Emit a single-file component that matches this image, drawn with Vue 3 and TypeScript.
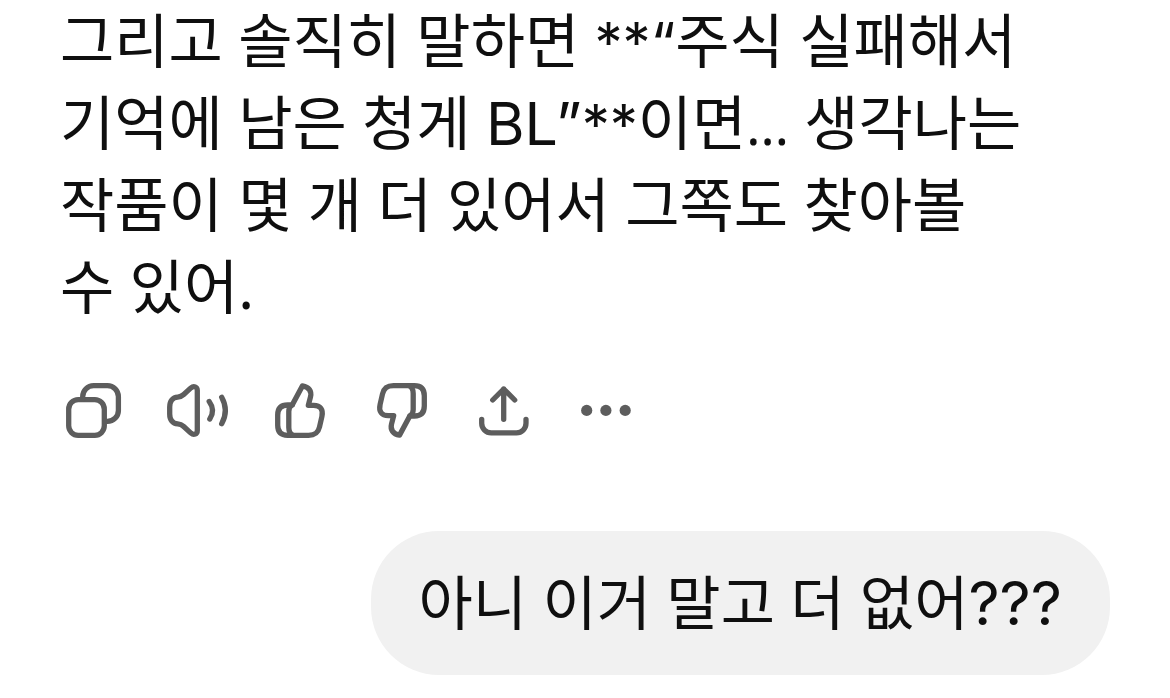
<script setup lang="ts">
interface Run { text: string; kind?: 'latin' | 'mark' | 'title' | 'ellipsis' }

const lines: Run[][] = [
  [{ text: '그리고 솔직히 말하면 ' }, { text: '**“', kind: 'mark' }, { text: '주식 실패해서' }],
  [{ text: '기억에 남은 청게 ' }, { text: 'BL”', kind: 'title' }, { text: '**', kind: 'mark' }, { text: '이면' }, { text: '...', kind: 'ellipsis' }, { text: ' 생각나는' }],
  [{ text: '작품이 몇 개 더 있어서 그쪽도 찾아볼' }],
  [{ text: '수 있어.' }],
]
const question: Run[] = [{ text: '아니 이거 말고 더 없어' }, { text: '???', kind: 'latin' }]
</script>

<template>
  <main class="chat">
    <p class="answer">
      <span v-for="(line, i) in lines" :key="i" class="line"><span v-for="(run, j) in line" :key="j" :class="run.kind">{{ run.text }}</span></span>
    </p>
    <div class="actions">
      <button type="button" aria-label="Copy">
        <svg viewBox="0 0 64 64">
          <rect x="8.7" y="19.7" width="35.6" height="35.6" rx="9.5" />
          <path d="M22.7 19v-2.4a11 11 0 0 1 11-11h13.7a11 11 0 0 1 11 11v13.8a11 11 0 0 1-11 11H45" />
        </svg>
      </button>
      <button type="button" aria-label="Read aloud">
        <svg viewBox="0 0 64 64">
          <path d="M7.7 27c0-6 3-9.6 8-9.9 2.5-.2 4-.8 6-2.6l7.2-6.6c2.8-2.4 6.4-1.2 6.4 2.6v40c0 3.8-3.6 5-6.4 2.6l-7.2-6.6c-2-1.8-3.5-2.4-6-2.6-5-.3-8-3.9-8-9.9z" />
          <path d="M47.2 21.5c4 5.5 4.3 12 .6 17.5M59.7 17.2c4.7 8.5 4.7 18 0 26.5" />
        </svg>
      </button>
      <button type="button" aria-label="Good response">
        <svg viewBox="0 0 64 64">
          <path d="M28.2 25h-4.5c-6.5 0-10 3.5-10 10v10.3c0 6.5 3.5 10 10 10h20.8c6.5 0 9.6-2.3 11-8.3l2.4-10.5c1.6-7-1.6-11.2-8.2-11.2h-5.4l2.2-8.5c1.4-5.5-1.6-10-8-11z" />
          <path d="M28.2 25c-2.4 1.2-3.4 3-3.4 6.5v16c0 4 1.2 6.3 4 7.8" />
        </svg>
      </button>
      <button type="button" aria-label="Bad response">
        <svg viewBox="0 0 64 64">
          <g transform="rotate(180 36 30.5)">
            <path d="M28.2 25h-4.5c-6.5 0-10 3.5-10 10v10.3c0 6.5 3.5 10 10 10h20.8c6.5 0 9.6-2.3 11-8.3l2.4-10.5c1.6-7-1.6-11.2-8.2-11.2h-5.4l2.2-8.5c1.4-5.5-1.6-10-8-11z" />
            <path d="M28.2 25c-2.4 1.2-3.4 3-3.4 6.5v16c0 4 1.2 6.3 4 7.8" />
          </g>
        </svg>
      </button>
      <button type="button" aria-label="Share">
        <svg viewBox="0 0 64 64">
          <path d="M35.7 39.3V9M24.7 20l11-11 11 11M13.7 39.3v4a9.5 9.5 0 0 0 9.5 9.5h25.3a9.5 9.5 0 0 0 9.5-9.5v-4" />
        </svg>
      </button>
      <button type="button" aria-label="More">
        <svg viewBox="0 0 64 64">
          <g class="dots"><circle cx="16.7" cy="30.4" r="5.6" /><circle cx="35.9" cy="30.4" r="5.6" /><circle cx="55.2" cy="30.4" r="5.6" /></g>
        </svg>
      </button>
    </div>
    <p class="bubble"><span v-for="(run, i) in question" :key="i" :class="run.kind">{{ run.text }}</span></p>
  </main>
</template>

<style>
body { margin: 0; background: #fff; }
</style>
<style scoped>
.chat { display: flex; flex-direction: column; padding: 0 60px; color: #0f0f0f; font: 59px/82px "Noto Sans", "Noto Sans CJK KR", sans-serif; }
.answer { margin: -1px 0 0; }
.line { display: block; height: 82px; white-space: pre; }
.latin, .mark, .title { font-family: Inter, sans-serif; line-height: 1; }
.latin { font-size: 61px; }
.mark { font-size: 56px; }
.title { font-size: 59px; }
.ellipsis { font-size: 53px; line-height: 1; }
.actions { display: flex; gap: 38px; margin-top: 53px; }
button { width: 64px; height: 64px; padding: 0; border: 0; background: none; }
svg { display: block; width: 64px; height: 64px; overflow: visible; fill: none; stroke: #5d5d5d; stroke-width: 5.3; stroke-linecap: round; stroke-linejoin: round; }
.dots { fill: #5d5d5d; stroke: none; }
.bubble { align-self: flex-end; margin: 87px 0 0; padding: 30px 48px 32px; border-radius: 68px; background: #f1f1f1; white-space: pre; }
</style>
